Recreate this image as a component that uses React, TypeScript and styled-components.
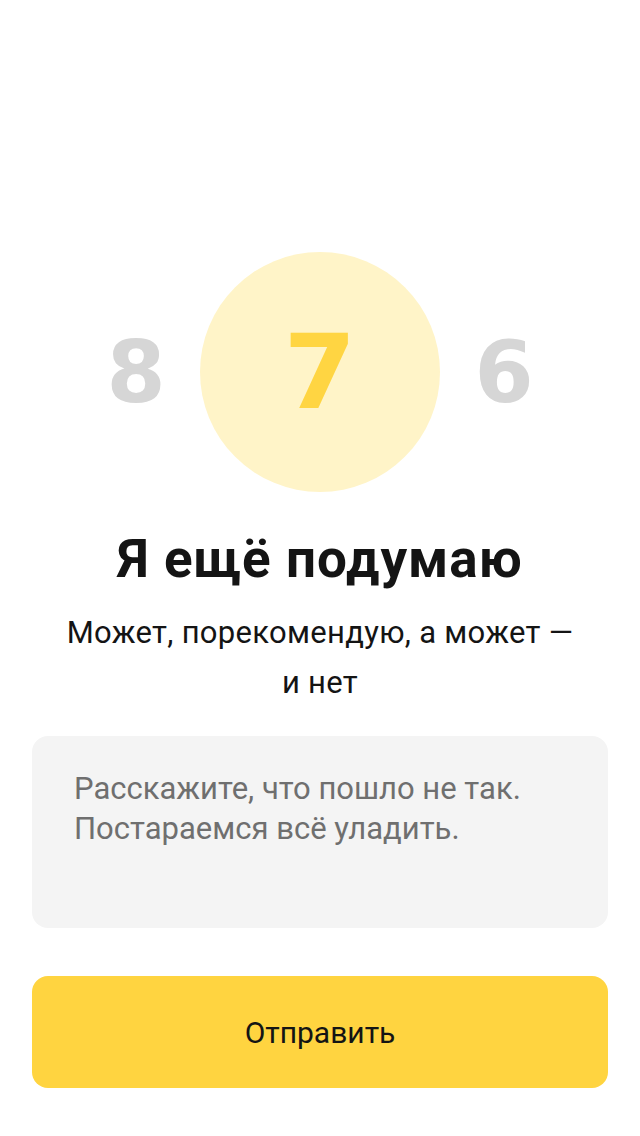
import React from "react";
import styled, { createGlobalStyle } from "styled-components";

const Global = createGlobalStyle`
  html, body { margin: 0; padding: 0; background: #fff; }
  body { font-family: Roboto, "Noto Sans", sans-serif; color: #141414; }
  * { box-sizing: border-box; }
`;

const Page = styled.main`
  display: flex;
  flex-direction: column;
  align-items: center;
  padding: 252px 32px 48px;
`;

const Rating = styled.div`
  display: grid;
  grid-template-columns: 128px 240px 128px;
  align-items: center;
`;

const Side = styled.span`
  text-align: center;
  font-family: "DejaVu Sans", sans-serif;
  font-weight: 700;
  font-size: 85px;
  line-height: 1;
  color: #d6d6d6;
`;

const Circle = styled.div`
  width: 240px;
  height: 240px;
  border-radius: 50%;
  background: #fff4c8;
  display: flex;
  align-items: center;
  justify-content: center;
  font-family: "DejaVu Sans", sans-serif;
  font-weight: 700;
  font-size: 104px;
  line-height: 1;
  color: #ffd542;
`;

const Title = styled.h1`
  margin: 35px 0 0;
  font-size: 53px;
  font-weight: 700;
  line-height: 64px;
  letter-spacing: 1px;
  text-align: center;
`;

const Subtitle = styled.p`
  margin: 17px 0 0;
  max-width: 560px;
  font-size: 31px;
  line-height: 50px;
  letter-spacing: 0.3px;
  text-align: center;
`;

const Field = styled.textarea`
  display: block;
  width: 100%;
  height: 192px;
  margin-top: 28px;
  padding: 33px 42px;
  border: none;
  border-radius: 16px;
  background: #f4f4f4;
  font-family: inherit;
  font-size: 31px;
  line-height: 40px;
  color: #141414;
  resize: none;
  outline: none;
  &::placeholder { color: #6f6f6f; }
`;

const Submit = styled.button`
  width: 100%;
  height: 112px;
  margin-top: 48px;
  border: none;
  border-radius: 16px;
  background: #ffd440;
  font-family: inherit;
  font-size: 30px;
  color: #141414;
  cursor: pointer;
`;

export default function App() {
  return (
    <>
      <Global />
      <Page>
        <Rating>
          <Side>8</Side>
          <Circle>7</Circle>
          <Side>6</Side>
        </Rating>
        <Title>Я ещё подумаю</Title>
        <Subtitle>Может, порекомендую, а может — и&nbsp;нет</Subtitle>
        <Field placeholder={"Расскажите, что пошло не так.\nПостараемся всё уладить."} />
        <Submit>Отправить</Submit>
      </Page>
    </>
  );
}
